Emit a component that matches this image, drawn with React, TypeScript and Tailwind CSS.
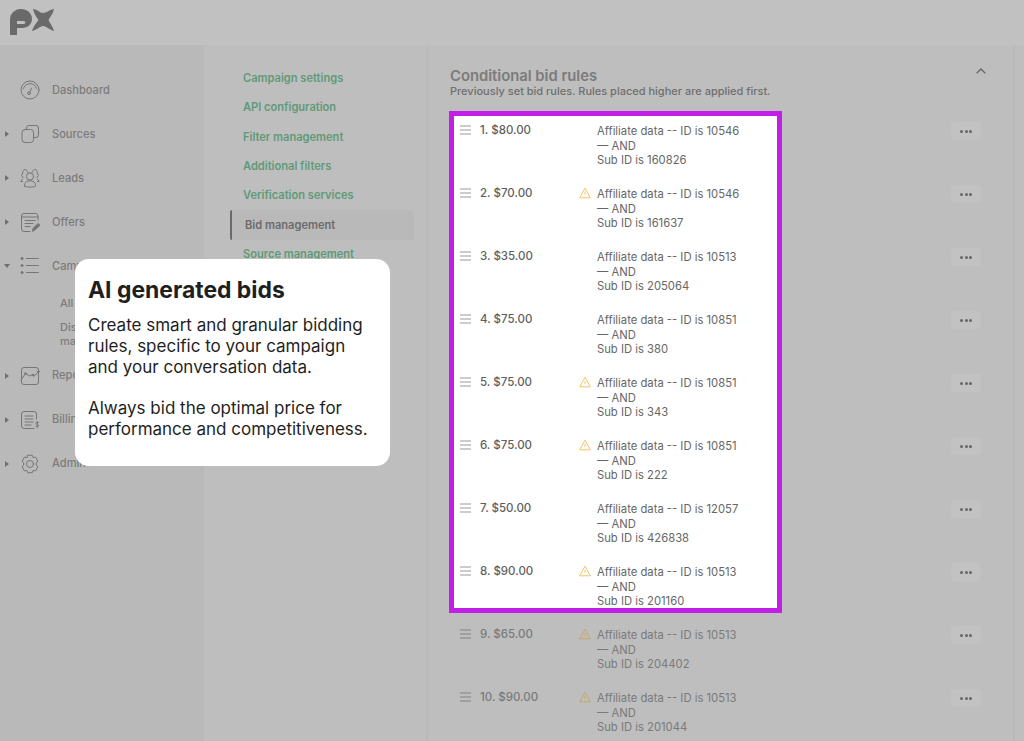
import React from "react";

const rows = [
  ["1. $80.00", false, "10546", "160826"],
  ["2. $70.00", true, "10546", "161637"],
  ["3. $35.00", false, "10513", "205064"],
  ["4. $75.00", false, "10851", "380"],
  ["5. $75.00", true, "10851", "343"],
  ["6. $75.00", true, "10851", "222"],
  ["7. $50.00", false, "12057", "426838"],
  ["8. $90.00", true, "10513", "201160"],
  ["9. $65.00", true, "10513", "204402"],
  ["10. $90.00", true, "10513", "201044"],
] as const;

function Icon({ children }: { children: React.ReactNode }) {
  return (
    <svg width="20" height="20" viewBox="0 0 20 20" fill="none" stroke="#767676" strokeWidth="1" strokeLinecap="round" strokeLinejoin="round" className="shrink-0">
      {children}
    </svg>
  );
}

const nav = [
  { label: "Dashboard", icon: <><circle cx="10" cy="10" r="9" /><path d="M3.500 8.500a6.800 6.800 0 0 1 13 0" /><circle cx="9" cy="13.200" r="1.400" /><path d="M9.800 12l1.700-3.800" /></> },
  { label: "Sources", icon: <><rect x="2" y="5.500" width="11.500" height="13" rx="3" /><path d="M6.500 5.500V4a2.500 2.500 0 0 1 2.500-2.500h7A2.500 2.500 0 0 1 18.500 4v7a2.500 2.500 0 0 1-2.500 2.500h-2.500" /></> },
  { label: "Leads", icon: <><circle cx="10" cy="8.500" r="3.600" /><path d="M4.500 18c-.5-4 3-5.200 5.500-5.200s6 1.200 5.500 5.200c-1 1.500-10 1.500-11 0z" /><path d="M8 4.500C7.500 2.500 6 1.500 5 1.500 3.500 1.500 2.500 3 2.800 5L1.500 7.500 3 9.500" /><path d="M12 4.500c.5-2 2-3 3-3 1.500 0 2.500 1.500 2.200 3.500l1.300 2.500L17 9.500" /><path d="M2.500 13.500H.800l1.700-2.500M17.500 13.500h1.700l-1.700-2.500" /></> },
  { label: "Offers", icon: <><path d="M18 8V4a2.500 2.500 0 0 0-2.500-2.500H4A2.500 2.500 0 0 0 1.500 4v13A2.500 2.500 0 0 0 4 19.500h6" /><path d="M1.500 5h16.500M5 8.500h10M5 11.500h8M5 14.500h5" /><path d="M12.500 19l.7-3 5-4.500 1.800 1.800-5 4.700z" fill="#767676" /></> },
];

const nav2 = [
  { label: "Reports", icon: <><path d="M4 1.500h12a2.500 2.500 0 0 1 2.500 2.500v12a2.500 2.500 0 0 1-2.500 2.500H4A2.500 2.500 0 0 1 1.500 16V4A2.500 2.500 0 0 1 4 1.500z" /><path d="M1 14l4.500-6.500 4 2.500 3-1.500 1.500 2 4.500-5" /><circle cx="5.500" cy="7.500" r=".8" fill="#767676" /><circle cx="13" cy="9" r=".8" fill="#767676" /><circle cx="18.500" cy="5.500" r=".8" fill="#767676" /></> },
  { label: "Billing", icon: <><path d="M16.500 9V4A2.500 2.500 0 0 0 14 1.500H4A2.500 2.500 0 0 0 1.500 4v12A2.500 2.500 0 0 0 4 18.500h10" /><path d="M5 6h8M5 9h8M5 12h8M5 15h6" /><path d="M18.500 12.500c-1.500-.7-2.500 0-2.500.8 0 1.500 2.500 1 2.500 2.400 0 1-1.200 1.500-2.500.8M17.200 11.500v6" /></> },
  { label: "Admin", icon: <><circle cx="10" cy="10" r="3.500" /><path d="M7.700 1.300h4.600l.8 2.300 2.500-.5 2.300 3.900-1.600 1.900v2.200l1.600 1.900-2.300 3.900-2.500-.5-.8 2.300H7.700l-.8-2.300-2.500.5-2.300-3.900 1.600-1.900V8.900L2.100 7l2.300-3.900 2.500.5z" /></> },
];

function NavRow({ label, caret, icon }: { label: string; caret: "right" | "down" | "none"; icon: React.ReactNode }) {
  return (
    <div className="relative flex h-[44px] items-center pl-[20px]">
      {caret === "right" && <div className="absolute left-[5px] h-0 w-0 border-y-[3px] border-l-[4px] border-y-transparent border-l-[#707070]" />}
      {caret === "down" && <div className="absolute left-[4px] h-0 w-0 border-x-[3px] border-t-[4px] border-x-transparent border-t-[#707070]" />}
      <Icon>{icon}</Icon>
      <span className="ml-[12px] text-[11.100px] font-medium text-[#7c7c7c]">{label}</span>
    </div>
  );
}

function Row({ r, dim, last }: { r: (typeof rows)[number]; dim?: boolean; last?: boolean }) {
  const [price, warn, id, sub] = r;
  return (
    <div className={last ? "flex h-[44px] pl-[6px]" : "flex h-[63px] pl-[6px]"}>
      <div className="mt-[2px] flex h-[10px] w-[11px] flex-col justify-between">
        <div className={dim ? "h-[2px] bg-[#a0a0a0]" : "h-[2px] bg-[#cccccc]"} />
        <div className={dim ? "h-[2px] bg-[#a0a0a0]" : "h-[2px] bg-[#cccccc]"} />
        <div className={dim ? "h-[2px] bg-[#a0a0a0]" : "h-[2px] bg-[#cccccc]"} />
      </div>
      <div className={dim ? "ml-[9px] w-[99px] text-[11.500px] font-medium leading-[15px] text-[#7a7a7a]" : "ml-[9px] w-[99px] text-[11.500px] font-medium leading-[15px] text-[#5f5f5f]"}>{price}</div>
      <div className="w-[18px] pt-[1px]">
        {warn && (
          <svg width="12" height="12" viewBox="0 0 12 12" fill="none" stroke={dim ? "#c9a566" : "#f5c469"} strokeWidth="1" strokeLinejoin="round">
            <path d="M6 1.200L11.300 10.800H0.700Z" />
            <path d="M6 4.800v3M6 9v.200" />
          </svg>
        )}
      </div>
      <div className={dim ? "pt-[1px] text-[11.250px] leading-[14.700px] text-[#7a7a7a]" : "pt-[1px] text-[11.250px] leading-[14.700px] text-[#666666]"}>
        <div>Affiliate data -- ID is {id}</div>
        <div>— AND</div>
        <div>Sub ID is {sub}</div>
      </div>
    </div>
  );
}

export default function App() {
  return (
    <div className="relative flex h-[741px] flex-col overflow-hidden bg-[#bebebe] font-['Inter',sans-serif]">
      <header className="flex h-[45px] shrink-0 items-center bg-[#c1c1c1] pl-[10px]">
        <svg width="45" height="27" viewBox="0 0 45 27" fill="#6a6a6a" className="mb-[1px]">
          <path fillRule="evenodd" d="M0 26h7v-7h5c6 0 10-4 10-9C22 4 17 0 11 0 5 0 0 4 0 11zM7 15v-3h7c1.800 0 1.800 3 0 3z" />
          <path d="M23 0c4 0 7 4 10 4s6-3 11-4c-1 5-4 8-5.500 11 1.500 3 4.500 7 5.500 11-4-1-8-5-11-5s-6 4-11 5c1-4 4-8 6.500-11C26 8 24 4 23 0z" />
        </svg>
      </header>
      <div className="flex min-h-0 flex-1">
        <aside className="w-[204px] shrink-0 bg-[#b9b9b9] pt-[23px]">
          {nav.map((n, i) => <NavRow key={n.label} label={n.label} icon={n.icon} caret={i === 0 ? "none" : "right"} />)}
          <NavRow label="Campaigns" caret="down" icon={<><path d="M6.500 2.500h12M6.500 9.500h12M6.500 16.500h12" /><circle cx="2" cy="2.500" r="1" fill="#767676" /><circle cx="2" cy="9.500" r="1" fill="#767676" /><circle cx="2" cy="16.500" r="1" fill="#767676" /></>} />
          <div className="pl-[60px] text-[11px] font-medium leading-[14px] text-[#7c7c7c]">
            <div className="pt-[7.500px]">All campaigns</div>
            <div className="w-[100px] pt-[10px]">Discount management</div>
          </div>
          <div className="pt-[6px]">
            {nav2.map((n) => <NavRow key={n.label} label={n.label} caret="right" icon={n.icon} />)}
          </div>
        </aside>
        <nav className="w-[224px] shrink-0 border-r-2 border-[#bababa] pl-[26px] pr-[12px] pt-[18.800px] text-[11.100px] font-semibold">
          {["Campaign settings", "API configuration", "Filter management", "Additional filters", "Verification services"].map((t) => (
            <div key={t} className="flex h-[29.300px] items-center pl-[13px] text-[#5f9a78]">{t}</div>
          ))}
          <div className="flex h-[29.300px] items-center rounded-[2px] border-l-2 border-[#6a6a6a] bg-[#b9b9b9] pl-[13px] text-[#6b6b6b]">Bid management</div>
          <div className="flex h-[29.300px] items-center pl-[13px] text-[#5f9a78]">Source management</div>
        </nav>
        <main className="w-[585px] shrink-0 pt-[23px]">
          <div className="flex items-start justify-between pl-[22px] pr-[27px]">
            <div>
              <div className="text-[14.800px] font-semibold leading-[16px] text-[#7b7b7b]">Conditional bid rules</div>
              <div className="text-[11px] font-medium leading-[15px] text-[#6f6f6f]">Previously set bid rules. Rules placed higher are applied first.</div>
            </div>
            <svg width="10" height="6" viewBox="0 0 10 6" fill="none" stroke="#666666" strokeWidth="1.300"><path d="M.7 5.300L5 1l4.300 4.300" /></svg>
          </div>
          <div className="mt-[12px] flex">
            <div className="ml-[21px] w-[333px]">
              <div className="border-[5px] border-[#c11fe5] bg-white pt-[7px]">
                {rows.slice(0, 8).map((r, i) => <Row key={r[0]} r={r} last={i === 7} />)}
              </div>
              <div className="pl-[5px] pt-[14px]">
                {rows.slice(8).map((r) => <Row key={r[0]} r={r} dim />)}
              </div>
            </div>
            <div className="ml-[169px] flex flex-col pt-[11px]">
              {rows.map((r) => (
                <div key={r[0]} className="h-[63px]">
                  <div className="flex h-[18px] w-[30px] items-center justify-center gap-[1.500px] rounded-[3px] bg-[#c2c2c2]">
                    <span className="h-[3px] w-[3px] rounded-full bg-[#666666]" />
                    <span className="h-[3px] w-[3px] rounded-full bg-[#666666]" />
                    <span className="h-[3px] w-[3px] rounded-full bg-[#666666]" />
                  </div>
                </div>
              ))}
            </div>
          </div>
        </main>
        <div className="flex-1 border-l-2 border-[#bababa]" />
      </div>
      <div className="absolute left-[75px] top-[259px] h-[207px] w-[315px] rounded-[14px] bg-white pl-[13px] pt-[16px] text-[#1f1f1f]">
        <div className="text-[22.900px] font-bold leading-[30px]">AI generated bids</div>
        <div className="mt-[10px] text-[17px] leading-[20.800px]">
          <div className="w-[285px]">Create smart and granular bidding rules, specific to your campaign and your conversation data.</div>
          <div className="mt-[20.800px] w-[285px]">Always bid the optimal price for performance and competitiveness.</div>
        </div>
      </div>
    </div>
  );
}
